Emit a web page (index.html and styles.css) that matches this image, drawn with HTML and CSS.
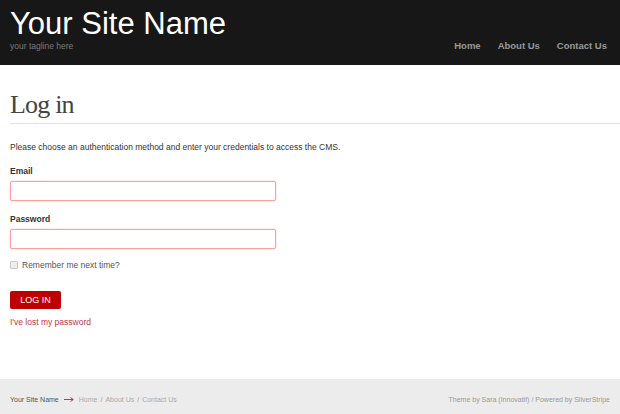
FILE: index.html
```html
<!DOCTYPE html>
<html>
<head>
<meta charset="utf-8">
<link rel="stylesheet" href="styles.css">
</head>
<body>
<header class="header">
  <div class="brand">
    <div class="site-name">Your Site Name</div>
    <div class="tagline">your tagline here</div>
  </div>
  <nav class="nav">
    <a href="#">Home</a>
    <a href="#">About Us</a>
    <a href="#">Contact Us</a>
  </nav>
</header>
<main class="main">
  <h1 class="title">Log in</h1>
  <p class="intro">Please choose an authentication method and enter your credentials to access the CMS.</p>
  <form class="form">
    <label class="label">Email</label>
    <input class="input" type="text">
    <label class="label label-pw">Password</label>
    <input class="input" type="password" autofocus>
    <label class="remember"><span class="check"></span>Remember me next time?</label>
    <button class="btn" type="button">LOG IN</button>
    <a class="lost" href="#">I've lost my password</a>
  </form>
</main>
<footer class="footer">
  <div class="crumbs">
    <span class="fname">Your Site Name</span>
    <svg class="arrow" width="10" height="5" viewBox="0 0 10 5"><path d="M0 2.5H9M6.5 0.5L9.3 2.5L6.5 4.5" fill="none" stroke="#c9333a" stroke-width="1"/></svg>
    <a href="#">Home</a><span class="sep">/</span><a href="#">About Us</a><span class="sep">/</span><a href="#">Contact Us</a>
  </div>
  <div class="credit">Theme by Sara (Innovatif) / Powered by SilverStripe</div>
</footer>
</body>
</html>
```

FILE: styles.css
```css
* { box-sizing: border-box; }
html, body { margin: 0; padding: 0; }
body {
  width: 620px;
  height: 414px;
  background: #fff;
  font-family: "Liberation Sans", Arial, sans-serif;
  display: flex;
  flex-direction: column;
  overflow: hidden;
}
.header {
  height: 65px;
  background: #171717;
  display: flex;
  justify-content: space-between;
  align-items: flex-end;
  padding: 0 13px 12px 10px;
}
.brand { display: flex; flex-direction: column; }
.site-name {
  color: #fff;
  font-size: 31px;
  line-height: 32px;
  margin-bottom: 1px;
}
.tagline {
  color: #7a7a7a;
  font-size: 8.5px;
  line-height: 10px;
  margin-bottom: 2px;
}
.nav { display: flex; gap: 17px; padding-bottom: 2px; }
.nav a {
  color: #999;
  font-weight: bold;
  font-size: 9.5px;
  text-decoration: none;
}
.main {
  flex: 1;
  padding: 0 0 0 10px;
}
.title {
  font-family: "Liberation Serif", Georgia, serif;
  font-weight: normal;
  font-size: 26px;
  letter-spacing: -0.8px;
  color: #444;
  margin: 26px 0 0;
  padding-bottom: 4px;
  border-bottom: 1px solid #e3e3e3;
  line-height: 28px;
}
.intro {
  margin: 18px 0 0;
  font-size: 8.5px;
  color: #333;
}
.form { display: flex; flex-direction: column; align-items: flex-start; }
.label {
  font-weight: bold;
  font-size: 8.5px;
  color: #333;
  margin-top: 14px;
  line-height: 10px;
}
.label-pw { margin-top: 13px; }
.input {
  width: 266px;
  height: 20px;
  margin-top: 5px;
  padding: 0 3px;
  border: 1px solid #f7a1a1;
  border-radius: 2px;
  box-shadow: 0 0 2px #f9baba;
  outline: none;
  caret-color: #333;
}
.remember {
  display: flex;
  align-items: center;
  gap: 4px;
  margin-top: 11px;
  font-size: 8.5px;
  color: #555;
}
.check {
  width: 8px;
  height: 8px;
  border: 1px solid #c8c8c8;
  border-radius: 1px;
  background: #eee;
}
.btn {
  margin-top: 21px;
  background: #bf0000;
  color: #fff;
  border: none;
  border-radius: 2px;
  width: 51px;
  height: 18px;
  font-family: "Liberation Sans", Arial, sans-serif;
  font-size: 9px;
  padding: 0;
}
.lost {
  margin-top: 8px;
  font-size: 8.5px;
  color: #c0364e;
  text-decoration: none;
}
.footer {
  height: 35px;
  background: #ececec;
  display: flex;
  justify-content: space-between;
  align-items: center;
  padding: 6px 10px 0 10px;
  font-size: 7px;
}
.crumbs { display: flex; align-items: center; }
.fname { color: #555; }
.arrow { margin: 0 5px 0 5px; display: block; }
.crumbs a { color: #aaa; text-decoration: none; }
.sep { color: #999; margin: 0 3px; }
.credit { color: #999; }
```
